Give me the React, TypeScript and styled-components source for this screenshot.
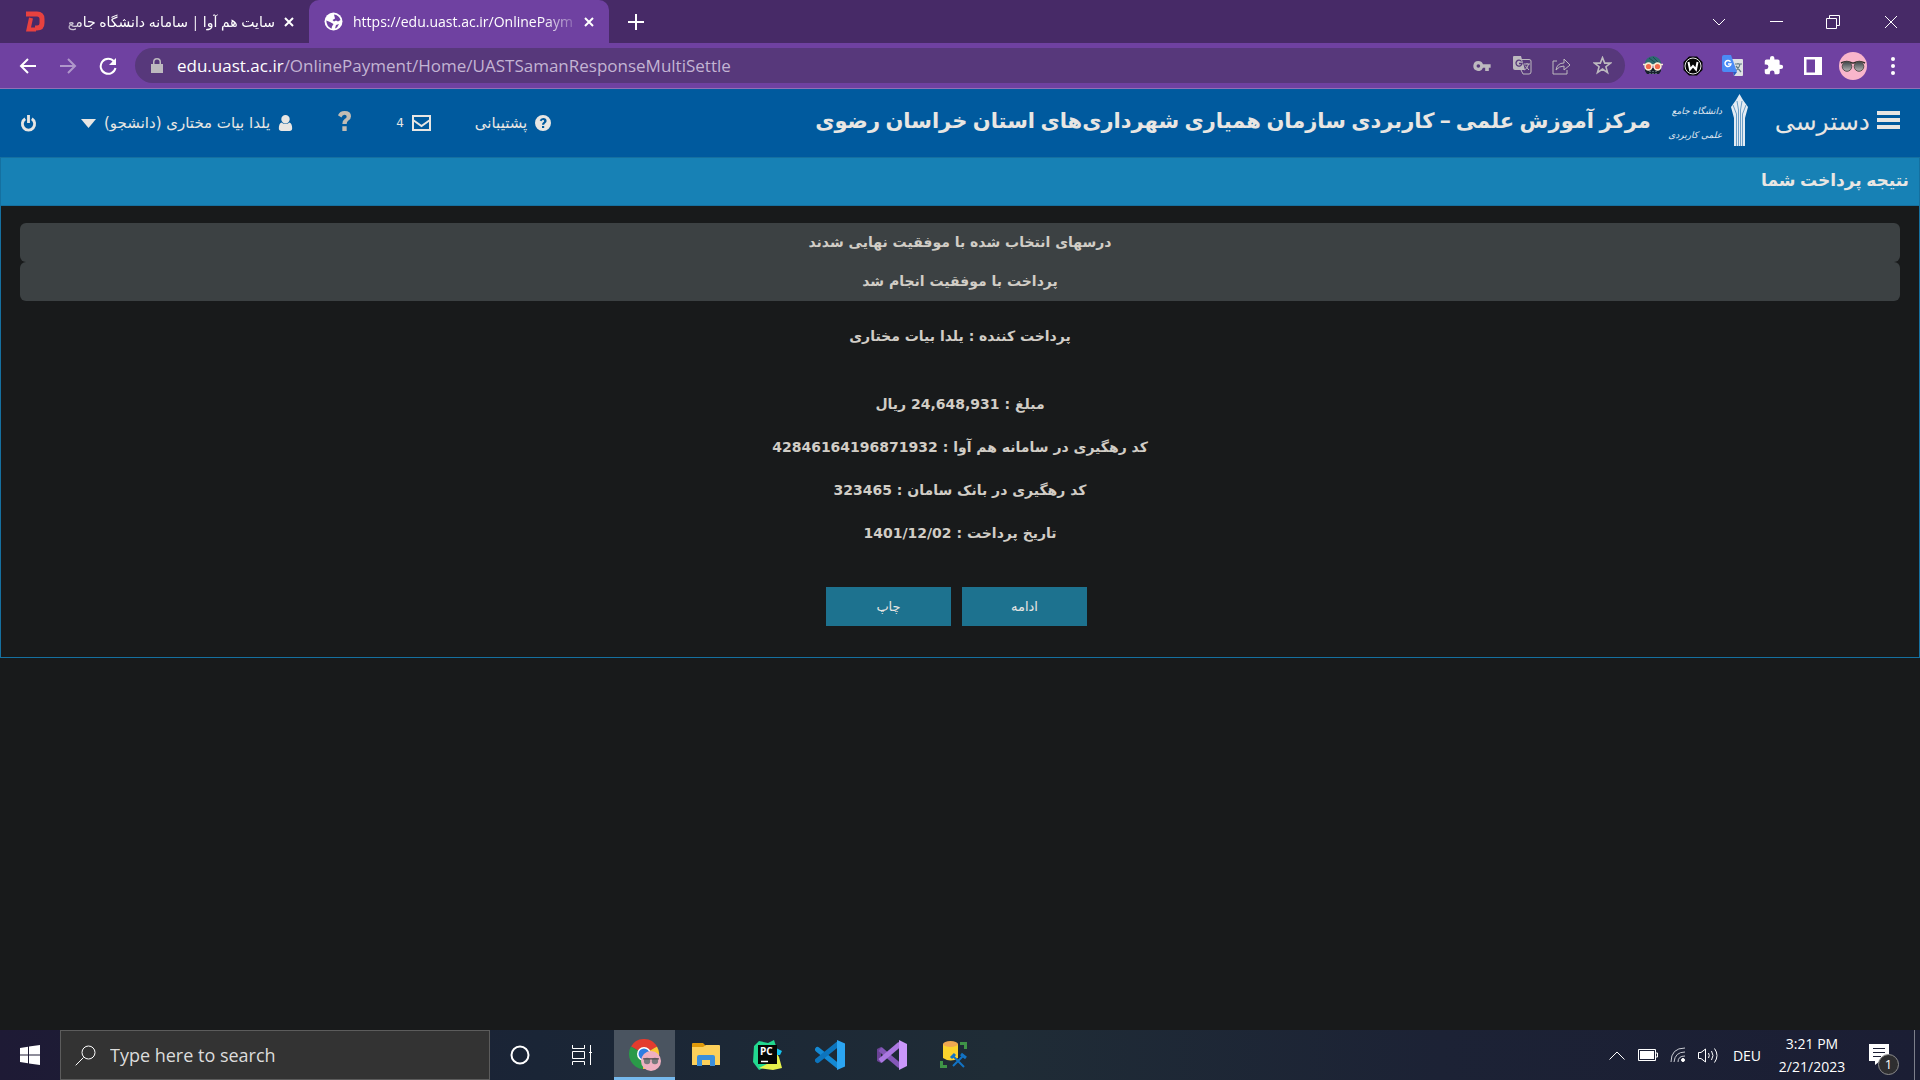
import React from "react";
import styled, { createGlobalStyle } from "styled-components";

const ui = `"Open Sans", "Noto Sans", "DejaVu Sans", sans-serif`;
const farsi = `"Noto Sans", "DejaVu Sans", sans-serif`;
const farsiWide = `"DejaVu Sans", sans-serif`;

const GlobalStyle = createGlobalStyle`
  *, *::before, *::after { box-sizing: border-box; }
  body { margin: 0; background: #181a1b; font-family: ${farsi}; color: #e8e6e3; }
  button { border: 0; padding: 0; background: none; color: inherit; font: inherit; cursor: pointer; }
  a { color: inherit; text-decoration: none; }
  h1, h2, p { margin: 0; }
  svg { display: block; flex: none; }
`;

const Screen = styled.div`
  min-height: 100vh;
  display: flex;
  flex-direction: column;
`;

/* ---------- browser frame ---------- */

const TabStrip = styled.div`
  display: flex;
  align-items: stretch;
  height: 43px;
  background: #472a67;
  font-family: ${ui};
  color: #fff;
`;

const Tab = styled.div<{ $active?: boolean }>`
  display: flex;
  align-items: center;
  gap: ${(p) => (p.$active ? 10 : 8)}px;
  width: ${(p) => (p.$active ? 300 : 309)}px;
  padding: 0 14px 0 ${(p) => (p.$active ? 15 : 25)}px;
  background: ${(p) => (p.$active ? "#6f41a1" : "transparent")};
  border-radius: 10px 10px 0 0;
`;

const TabName = styled.button<{ $rtl?: boolean }>`
  flex: 1;
  white-space: nowrap;
  direction: ${(p) => (p.$rtl ? "rtl" : "ltr")};
  text-align: start;
  font-size: 14px;
  line-height: 24px;
  mask-image: linear-gradient(to ${(p) => (p.$rtl ? "left" : "right")}, #000 86%, transparent 104%);
`;

const IconButton = styled.button<{ $w?: number }>`
  display: flex;
  align-items: center;
  justify-content: center;
  flex: none;
  width: ${(p) => p.$w ?? 40}px;
`;

const ForwardButton = styled(IconButton)`
  opacity: 0.45;
`;

const Spacer = styled.div`
  flex: 1;
`;

const Toolbar = styled.div`
  display: flex;
  align-items: center;
  height: 46px;
  padding: 0 7px 0 8px;
  background: #6f41a1;
  border-bottom: 1px solid #9170b5;
  font-family: ${ui};
  color: #fff;
`;

const AddressBar = styled.div`
  display: flex;
  align-items: center;
  flex: 1;
  height: 35px;
  margin: 0 8px 0 7px;
  padding: 0 3px 0 16px;
  border-radius: 18px;
  background: #57387b;
  color: #bdb9bf;
`;

const Address = styled.div`
  flex: 1;
  margin-left: 14px;
  font-size: 17px;
  line-height: 24px;
  white-space: nowrap;
  color: #c3b4d3;
  outline: 0;
`;

const Host = styled.span`
  color: #fff;
`;

/* ---------- site header ---------- */

const Header = styled.header`
  direction: rtl;
  display: flex;
  align-items: center;
  justify-content: space-between;
  height: 68px;
  padding: 0 20px;
  background: #005a9e;
`;

const HeaderGroup = styled.div`
  display: flex;
  align-items: center;
  padding-bottom: 6px;
`;

const MenuButton = styled.button`
  display: flex;
  align-items: center;
  gap: 7px;
  font-size: 25px;
  line-height: 32px;
`;

const Brand = styled.a`
  display: block;
  margin: 0 27px 0 20px;
`;

const SiteTitle = styled.h1`
  font-size: 21px;
  line-height: 32px;
  font-weight: 700;
  white-space: nowrap;
`;

const AccountNav = styled.nav`
  display: flex;
  align-items: center;
  gap: 44px;
  font-family: ${farsiWide};
`;

const NavLink = styled.a<{ $muted?: boolean }>`
  display: flex;
  align-items: center;
  gap: 8px;
  padding-bottom: ${(p) => (p.$muted ? 4 : 0)}px;
  font-size: 15px;
  line-height: 24px;
  white-space: nowrap;
  color: ${(p) => (p.$muted ? "#c2bcb3" : "#e8e6e3")};
`;

const Count = styled.span`
  font-size: 12px;
`;

/* ---------- payment result ---------- */

const Panel = styled.section`
  direction: rtl;
  border: 1px solid #1570a0;
`;

const PanelTitle = styled.h2`
  display: flex;
  align-items: center;
  height: 48px;
  padding: 0 10px 4px;
  background: #1781b5;
  border-bottom: 1px solid #1570a0;
  font-size: 17px;
  line-height: 24px;
`;

const PanelBody = styled.div`
  display: flex;
  flex-direction: column;
  align-items: center;
  padding: 17px 19px 31px;
  font-family: ${farsiWide};
  font-size: 14px;
  font-weight: 700;
  line-height: 23px;
  color: #d1cdc6;
`;

const Notice = styled.p`
  width: 100%;
  padding: 8px;
  border-radius: 6px;
  background: #3c4143;
  text-align: center;
`;

const Payer = styled.p`
  margin-top: 24px;
`;

const Details = styled.div`
  display: flex;
  flex-direction: column;
  align-items: center;
  gap: 20px;
  margin-top: 45px;
`;

const Actions = styled.div`
  display: flex;
  gap: 11px;
  margin: 42px 7px 0 0;
`;

const ActionButton = styled.button`
  width: 125px;
  height: 39px;
  background: #1d728f;
  color: #e8e6e3;
  font-size: 13px;
  font-weight: 400;
`;

/* ---------- taskbar ---------- */

const Taskbar = styled.footer`
  display: flex;
  align-items: stretch;
  height: 50px;
  margin-top: auto;
  background: linear-gradient(90deg, #1e1a35 0%, #1a2536 28%, #1f2c36 52%, #1c2235 75%, #1b1e34 100%);
  font-family: ${ui};
  color: #fff;
`;

const SearchBox = styled.label`
  display: flex;
  align-items: center;
  gap: 14px;
  width: 430px;
  padding: 0 14px;
  background: #333;
  border: 1px solid #5c5c5c;
`;

const SearchInput = styled.input`
  flex: 1;
  min-width: 0;
  border: 0;
  padding: 0;
  outline: 0;
  background: none;
  font-family: ${ui};
  font-size: 18px;
  color: #dcdcdc;
  &::placeholder { color: #dcdcdc; opacity: 1; }
`;

const AppButton = styled(IconButton)<{ $active?: boolean }>`
  border-bottom: 3px solid ${(p) => (p.$active ? "#76b9ed" : "transparent")};
  border-top: 3px solid transparent;
  background: ${(p) => (p.$active ? "#4a5460" : "transparent")};
`;

const Language = styled.button`
  width: 46px;
  font-size: 14px;
`;

const Clock = styled.button`
  width: 84px;
  font-size: 14px;
  line-height: 23px;
  white-space: nowrap;
`;

const Notifications = styled.button`
  position: relative;
  display: flex;
  align-items: center;
  width: 61px;
  padding-left: 15px;
  border-right: 1px solid #7d7f8b;
  margin-right: 5px;
`;

const Badge = styled.span`
  position: absolute;
  left: 24px;
  top: 24px;
  width: 21px;
  height: 21px;
  border: 1px solid #8c8c8c;
  border-radius: 50%;
  background: #2e2e30;
  font-size: 13px;
  line-height: 19px;
  text-align: center;
`;

/* ---------- icons ---------- */

type StrokeProps = { w: number; h?: number; d: string; sw?: number; vb?: string };

const Stroke = ({ w, h, d, sw = 2, vb }: StrokeProps) => (
  <svg width={w} height={h ?? w} viewBox={vb ?? `0 0 ${w} ${h ?? w}`} fill="none" stroke="currentColor" strokeWidth={sw}>
    <path d={d} />
  </svg>
);

const Solid = ({ w, h, d, vb = "0 0 24 24" }: { w: number; h?: number; d: string; vb?: string }) => (
  <svg width={w} height={h ?? w} viewBox={vb} fill="currentColor" fillRule="evenodd">
    <path d={d} />
  </svg>
);

const CloseIcon = () => <Stroke w={10} d="M1 1L9 9M9 1L1 9" />;

const SiteFavicon = () => (
  <svg width="20" height="21" viewBox="0 0 20 21" fill="none" stroke="#e8413f" strokeWidth="5">
    <path d="M1 3H12Q17 3 17 8V12Q17 17 12 17H10" />
    <path d="M6 7L3.500 18.500H11" strokeWidth="4" />
  </svg>
);

const GlobeIcon = () => (
  <svg width="19" height="19" viewBox="0 0 19 19">
    <circle cx="9.5" cy="9.5" r="9" fill="#fff" />
    <path d="M10 2.500Q15 3 16.500 8L14 9.500L12 8.500L10 9.500L8.500 8L11 6.500Z" fill="#6f41a1" />
    <path d="M2.300 8.500L6 10L9.500 12L8 14.500L7.500 16.700Q2.500 14.500 2.300 8.500Z" fill="#6f41a1" />
    <path d="M12 13L15 12L13 15.500L11 16.500Z" fill="#6f41a1" />
  </svg>
);

const TranslateMono = () => (
  <svg width="19" height="19" viewBox="0 0 19 19">
    <path d="M8 3.500H16Q18 3.500 18 5V16Q18 18 16 18H10L8 14" fill="none" stroke="#bdb9bf" strokeWidth="1" />
    <path d="M1 0H8L12 14H2Q0 14 0 12V1Q0 0 1 0Z" fill="#bdb9bf" />
    <path d="M8.500 5.500A3 3 0 1 0 9 7.500H6" fill="none" stroke="#57387b" strokeWidth="1.300" />
    <path d="M11 8H17M14 7V8M15.500 8Q15 12 11.500 14M12 9.500L16 14" fill="none" stroke="#bdb9bf" strokeWidth="1" />
  </svg>
);

const TranslateColor = () => (
  <svg width="22" height="22" viewBox="0 0 22 22">
    <path d="M9 4H20Q21 4 21 5V20Q21 21 20 21H12Z" fill="#dfe1e3" />
    <path d="M13 9H20M16 8V9M18 9Q17 14 13 16M14 11L19 17" fill="none" stroke="#5f7a84" strokeWidth="1.200" />
    <path d="M11 17H15L12 21Z" fill="#2b5cc0" />
    <path d="M2 0H9L15 17H2Q0 17 0 15V2Q0 0 2 0Z" fill="#4b8bf5" />
    <path d="M8.500 6.800A3 3 0 1 0 9 9H6" fill="none" stroke="#fff" strokeWidth="1.500" />
  </svg>
);

const MaskIcon = () => (
  <svg width="20" height="20" viewBox="0 0 20 20">
    <path d="M1.500 9Q2 1 10 0Q18 1 18.500 9Z" fill="#2d6b70" />
    <path d="M6 2L14 8M10 1L16 7" stroke="#1c4a50" />
    <path d="M2 12H18V15L16 18H4L2 15Z" fill="#17202c" />
    <path d="M7 15V19M10 15V19M13 15V19" stroke="#8aa4aa" strokeDasharray="1 1" />
    <circle cx="5.500" cy="10.500" r="3.400" fill="#ef6a4c" stroke="#f7ead2" strokeWidth="1.600" />
    <circle cx="14.500" cy="10.500" r="3.400" fill="#ef6a4c" stroke="#f7ead2" strokeWidth="1.600" />
    <path d="M0 8.500H3M17 8.500H20M8.500 9H11.500" stroke="#f7ead2" strokeWidth="1.500" />
  </svg>
);

const WIcon = () => (
  <svg width="20" height="20" viewBox="0 0 20 20">
    <path d="M6 .5H14L19.500 6V14L14 19.500H6L.5 14V6Z" fill="#050505" />
    <circle cx="10" cy="10" r="8" fill="#050505" stroke="#e8e8e8" strokeWidth="1" />
    <path d="M5.500 6L7 13.500L10 10L13 13.500L14.500 6" fill="none" stroke="#fff" strokeWidth="2" />
  </svg>
);

const Avatar = ({ size }: { size: number }) => (
  <svg width={size} height={size} viewBox="0 0 28 28">
    <defs>
      <linearGradient id="lens" x1="0" x2="0" y1="0" y2="1">
        <stop offset="0" stopColor="#3b4548" />
        <stop offset="1" stopColor="#b9b5b6" />
      </linearGradient>
    </defs>
    <circle cx="14" cy="14" r="14" fill="#f9b5cb" />
    <path d="M2 11Q8 8 13 11H15Q20 8 26 11" fill="none" stroke="#33302e" strokeWidth="1.500" />
    <circle cx="8" cy="14.500" r="4.800" fill="url(#lens)" stroke="#57504d" />
    <circle cx="20" cy="14.500" r="4.800" fill="url(#lens)" stroke="#57504d" />
  </svg>
);

const UniversityLogo = () => (
  <svg width="77" height="52" viewBox="0 0 77 52" direction="rtl" overflow="visible">
    <path d="M68.500 0L72 6L77 13L74 24V52H63V24L60 13L65 6Z" fill="#e4ecf4" />
    <path d="M65.500 52V20L62 11M67.500 52V16L66 7M69.500 52V16L71 7M71.500 52V20L75 11" stroke="#4d8bbb" strokeWidth="0.800" fill="none" />
    <g fill="#e4ebf2" fontFamily="DejaVu Sans, sans-serif" fontStyle="italic" fontSize="9">
      <text x="51" y="20">دانشگاه جامع</text>
      <text x="51" y="44">علمی کاربردی</text>
    </g>
  </svg>
);

const ChromeIcon = () => (
  <svg width="32" height="32" viewBox="0 0 32 32">
    <path d="M15 15L2 7.500A15 15 0 0 1 28 7.500Z" fill="#e33b2e" />
    <path d="M15 15L2 7.500A15 15 0 0 0 14 30Z" fill="#2a9a48" />
    <path d="M15 15L28 7.500A15 15 0 0 1 14 30Z" fill="#fcc934" />
    <path d="M15 8H28.300L26 5H12Z" fill="#e33b2e" />
    <circle cx="15" cy="15" r="7" fill="#fff" />
    <circle cx="15" cy="15" r="5.500" fill="#2f7de1" />
    <svg x="12" y="12" width="20" height="20" viewBox="0 0 28 28">
      <circle cx="14" cy="14" r="14" fill="#efb0c0" />
      <circle cx="8.500" cy="14" r="4.500" fill="#77797c" />
      <circle cx="19.500" cy="14" r="4.500" fill="#77797c" />
      <path d="M3 11H25" stroke="#5b5557" strokeWidth="2" />
    </svg>
  </svg>
);

const FolderIcon = () => (
  <svg width="28" height="24" viewBox="0 0 28 24">
    <path d="M0 1Q0 0 1 0H11L14 3V5H0Z" fill="#e09a0a" />
    <path d="M0 4H11L14 2H27Q28 2 28 3V22H0Z" fill="#fdd05a" />
    <path d="M5 23V14Q5 12 7 12H21Q23 12 23 14V23H18V17H10V23Z" fill="#3c8fdc" />
  </svg>
);

const PyCharmIcon = () => (
  <svg width="30" height="30" viewBox="0 0 30 30">
    <path d="M1 6L6 1L15 3L21 0L23 6L20 24L6 30L0 22Z" fill="#22d88f" />
    <path d="M23 12L26 17L29 28L20 30L6 28L22 20Z" fill="#e6f14b" />
    <path d="M23 8L29 11L27 15L23 15Z" fill="#16c3ee" />
    <rect x="5" y="5" width="19" height="19" fill="#050805" />
    <path d="M8 21.500H15" stroke="#fff" strokeWidth="1.500" />
    <text x="7" y="14.500" fill="#fff" fontFamily="Open Sans, sans-serif" fontWeight="700" fontSize="10">PC</text>
  </svg>
);

const VSCodeIcon = () => (
  <svg width="30" height="30" viewBox="0 0 30 30">
    <path d="M2.500 9.500L23 26" stroke="#1489d4" strokeWidth="5" strokeLinecap="round" />
    <path d="M2.500 20.500L23 4" stroke="#0c74bd" strokeWidth="5" strokeLinecap="round" />
    <path d="M22 0L30 3.500V26.500L22 30Z" fill="#2ba5f2" />
  </svg>
);

const VisualStudioIcon = () => (
  <svg width="30" height="30" viewBox="0 0 30 30">
    <path d="M0 9L4 7V23L0 21Z" fill="#6a4294" />
    <path d="M3 9L23 26" stroke="#8457b8" strokeWidth="5" />
    <path d="M3 21L23 4" stroke="#ab78e2" strokeWidth="5" />
    <path d="M22 0L30 4V26L22 30Z" fill="#cb97fb" />
  </svg>
);

const DatabaseIcon = () => (
  <svg width="30" height="30" viewBox="0 0 30 30">
    <path d="M21 3.500H26.500V9M2.500 21V26.500H8" fill="none" stroke="#3f9447" strokeWidth="3" />
    <path d="M4 4H19V18Q12 23 4 18Z" fill="#fbd32d" />
    <ellipse cx="11.500" cy="4" rx="7.500" ry="3" fill="#f0a851" />
    <path d="M14 26L25 15M14 16L25 27" stroke="#1273c4" strokeWidth="2" />
    <path d="M12 18L16 14M22 14L27 18" stroke="#1273c4" strokeWidth="3" />
  </svg>
);

const BellPanelIcon = () => (
  <svg width="20" height="22" viewBox="0 0 20 22">
    <path d="M0 0H20V17H11L6 21V17H0Z" fill="#fff" />
    <path d="M4 4.500H16M4 8.500H16M4 12.500H12" stroke="#1b1e34" />
  </svg>
);

/* ---------- content ---------- */

const notices = ["درسهای انتخاب شده با موفقیت نهایی شدند", "پرداخت با موفقیت انجام شد"];

const details = [
  "مبلغ : 24,648,931 ریال",
  "کد رهگیری در سامانه هم آوا : 42846164196871932",
  "کد رهگیری در بانک سامان : 323465",
  "تاریخ پرداخت : 1401/12/02",
];

const apps = [
  { name: "File Explorer", icon: <FolderIcon /> },
  { name: "PyCharm", icon: <PyCharmIcon /> },
  { name: "Visual Studio Code", icon: <VSCodeIcon /> },
  { name: "Visual Studio", icon: <VisualStudioIcon /> },
  { name: "Data Studio", icon: <DatabaseIcon /> },
];

const starPath = "M12 2L14.800 9H22L16.300 13.500L18.400 21L12 16.500L5.600 21L7.700 13.500L2 9H9.200Z";

function BrowserFrame() {
  return (
    <>
      <TabStrip>
        <Tab>
          <SiteFavicon />
          <TabName $rtl>سایت هم آوا | سامانه دانشگاه جامع</TabName>
          <IconButton $w={12} aria-label="Close tab"><CloseIcon /></IconButton>
        </Tab>
        <Tab $active>
          <GlobeIcon />
          <TabName>https://edu.uast.ac.ir/OnlinePaym</TabName>
          <IconButton $w={12} aria-label="Close tab"><CloseIcon /></IconButton>
        </Tab>
        <IconButton $w={54} aria-label="New tab"><Stroke w={16} d="M8 0V16M0 8H16" /></IconButton>
        <Spacer />
        <IconButton $w={58} aria-label="Search tabs"><Stroke w={14} h={8} d="M1 1L7 7L13 1" sw={1} /></IconButton>
        <IconButton $w={56} aria-label="Minimize"><Stroke w={13} d="M0 6.500H13" sw={1} /></IconButton>
        <IconButton $w={58} aria-label="Restore"><Stroke w={14} d="M.5 3.500H10.500V13.500H.5ZM3.500 3V.5H13.500V10.500H11" sw={1} /></IconButton>
        <IconButton $w={58} aria-label="Close"><Stroke w={14} d="M1 1L13 13M13 1L1 13" sw={1} /></IconButton>
      </TabStrip>
      <Toolbar>
        <IconButton aria-label="Back"><Stroke w={18} d="M17 9H2M9 2L2 9L9 16" /></IconButton>
        <ForwardButton aria-label="Forward"><Stroke w={18} d="M1 9H16M9 2L16 9L9 16" /></ForwardButton>
        <IconButton aria-label="Reload">
          <svg width="18" height="18" viewBox="0 0 18 18">
            <path d="M15 4.500A7.500 7.500 0 1 0 16.500 11" fill="none" stroke="#fff" strokeWidth="2" />
            <path d="M17 1V8H10Z" fill="#fff" />
          </svg>
        </IconButton>
        <AddressBar>
          <Solid w={12} h={15} vb="0 0 12 15" d="M2 6V4A4 4 0 0 1 10 4V6H12V15H0V6ZM3.500 6H8.500V4A2.500 2.500 0 0 0 3.500 4Z" />
          <Address role="textbox" aria-label="Address" contentEditable suppressContentEditableWarning spellCheck={false}>
            <Host>edu.uast.ac.ir</Host>/OnlinePayment/Home/UASTSamanResponseMultiSettle
          </Address>
          <IconButton aria-label="Passwords">
            <Solid w={18} h={10} vb="0 0 19 11" d="M5.500 0A5.500 5.500 0 0 1 10.600 3.500H19V7.500H17V11H13V7.500H10.600A5.500 5.500 0 1 1 5.500 0ZM5.500 3.500A2 2 0 1 0 5.500 7.500A2 2 0 1 0 5.500 3.500Z" />
          </IconButton>
          <IconButton aria-label="Translate"><TranslateMono /></IconButton>
          <IconButton aria-label="Share"><Stroke w={20} h={18} d="M5 4H1V17H15V13M4 13Q5 6 12 6V2L18 8L12 13V9Q7 9 4 13Z" sw={1} /></IconButton>
          <IconButton aria-label="Bookmark"><Stroke w={19} d={starPath} vb="0 0 24 24" /></IconButton>
        </AddressBar>
        <IconButton aria-label="Mask extension"><MaskIcon /></IconButton>
        <IconButton aria-label="W extension"><WIcon /></IconButton>
        <IconButton aria-label="Google Translate"><TranslateColor /></IconButton>
        <IconButton aria-label="Extensions">
          <Solid w={21} d="M20.500 11H19V7a2 2 0 0 0-2-2h-4V3.500a2.500 2.500 0 0 0-5 0V5H4a2 2 0 0 0-2 2v3.800h1.500a2.700 2.700 0 0 1 0 5.400H2V20a2 2 0 0 0 2 2h3.800v-1.500a2.700 2.700 0 0 1 5.400 0V22H17a2 2 0 0 0 2-2v-4h1.500a2.500 2.500 0 0 0 0-5z" />
        </IconButton>
        <IconButton aria-label="Side panel"><Solid w={18} vb="0 0 18 18" d="M0 0H18V18H0ZM2.500 2.500H11V15.500H2.500Z" /></IconButton>
        <IconButton aria-label="Profile"><Avatar size={28} /></IconButton>
        <IconButton aria-label="Menu">
          <svg width="4" height="18" viewBox="0 0 4 18" fill="#fff">
            <circle cx="2" cy="2" r="2" /><circle cx="2" cy="9" r="2" /><circle cx="2" cy="16" r="2" />
          </svg>
        </IconButton>
      </Toolbar>
    </>
  );
}

function SiteHeader() {
  return (
    <Header>
      <HeaderGroup>
        <MenuButton>
          <Solid w={23} h={18} vb="0 0 23 18" d="M0 0H23V4H0ZM0 7H23V11H0ZM0 14H23V18H0Z" />
          دسترسی
        </MenuButton>
        <Brand href="#" aria-label="دانشگاه جامع علمی کاربردی"><UniversityLogo /></Brand>
        <SiteTitle>مرکز آموزش علمی – کاربردی سازمان همیاری شهرداری‌های استان خراسان رضوی</SiteTitle>
      </HeaderGroup>
      <AccountNav>
        <NavLink href="#">
          <Solid w={16} vb="0 0 16 16" d="M8 0A8 8 0 1 1 8 16A8 8 0 1 1 8 0ZM7 11V13H9.200V11ZM4.700 5.500L6.500 6.300Q7 5 8 5Q9.200 5 9.200 6Q9.200 6.800 8 7.500Q7 8.200 7 9.800H9.200Q9.200 9 10.200 8.300Q11.600 7.400 11.600 6Q11.600 3 8.200 3Q5.500 3 4.700 5.500Z" />
          پشتیبانی
        </NavLink>
        <NavLink href="#">
          <Stroke w={19} h={16} d="M1 1H18V15H1ZM1 5L9.500 11L18 5" />
          <Count>4</Count>
        </NavLink>
        <NavLink href="#" $muted aria-label="راهنما">
          <Solid w={15} h={20} vb="0 0 15 23" d="M5 17.500H10V23H5ZM0 5Q2 0 7.500 0Q15 0 15 6Q15 9 12 11Q10 12.500 10 15H5Q5 11 8 9Q10 8 10 6.200Q10 4.200 7.500 4.200Q5 4.200 4 7.500Z" />
        </NavLink>
        <NavLink href="#">
          <Solid w={15} h={16} vb="0 0 15 18" d="M7.500 0A4.500 4.500 0 1 1 7.500 9.500A4.500 4.500 0 1 1 7.500 0ZM3 8.500Q7.500 12 12 8.500Q15 10 15 15Q15 18 12 18H3Q0 18 0 15Q0 10 3 8.500Z" />
          یلدا بیات مختاری (دانشجو)
          <Solid w={15} h={9} vb="0 0 15 9" d="M0 0H15L7.500 9Z" />
        </NavLink>
        <NavLink href="#" aria-label="خروج">
          <Stroke w={17} h={17} vb="0 0 17 18" d="M5 4A6.500 6.500 0 1 0 12 4M8.500 0V8.500" sw={3} />
        </NavLink>
      </AccountNav>
    </Header>
  );
}

function PaymentResult() {
  return (
    <Panel>
      <PanelTitle>نتیجه پرداخت شما</PanelTitle>
      <PanelBody>
        {notices.map((text) => <Notice key={text}>{text}</Notice>)}
        <Payer>پرداخت کننده : یلدا بیات مختاری</Payer>
        <Details>
          {details.map((text) => <p key={text}>{text}</p>)}
        </Details>
        <Actions>
          <ActionButton>ادامه</ActionButton>
          <ActionButton>چاپ</ActionButton>
        </Actions>
      </PanelBody>
    </Panel>
  );
}

function WindowsTaskbar() {
  return (
    <Taskbar>
      <IconButton $w={60} aria-label="Start">
        <Solid w={20} vb="0 0 20 20" d="M0 3L8 1.700V9.500H0ZM9 1.500L20 0V9.500H9ZM0 10.500H8V18.300L0 17ZM9 10.500H20V20L9 18.500Z" />
      </IconButton>
      <SearchBox>
        <Stroke w={21} d="M.7 20.300L8.500 12.500M13.500 1A6.500 6.500 0 1 1 13.500 14A6.500 6.500 0 1 1 13.500 1Z" sw={1} />
        <SearchInput type="text" aria-label="Search" placeholder="Type here to search" />
      </SearchBox>
      <IconButton $w={60} aria-label="Cortana">
        <Stroke w={20} d="M10 1.500A8.500 8.500 0 1 1 10 18.500A8.500 8.500 0 1 1 10 1.500Z" sw={2} />
      </IconButton>
      <IconButton $w={64} aria-label="Task view">
        <Stroke w={20} d="M.5 0V3.500H12.500V0M.5 20V16.500H12.500V20M.5 6.500H12.500V13.500H.5ZM18.500 0V20M17 7.500H20" sw={1} />
      </IconButton>
      <AppButton $w={61} $active aria-label="Google Chrome"><ChromeIcon /></AppButton>
      {apps.map((app) => (
        <AppButton key={app.name} $w={62} aria-label={app.name}>{app.icon}</AppButton>
      ))}
      <Spacer />
      <IconButton $w={30} aria-label="Show hidden icons"><Stroke w={16} h={9} d="M0.500 8.500L8 1L15.500 8.500" sw={1} /></IconButton>
      <IconButton $w={32} aria-label="Battery">
        <svg width="20" height="12" viewBox="0 0 20 12"><path d="M.5.5H17.500V11.500H.5ZM18 4H19.500V8H18" fill="none" stroke="#fff" /><rect x="2" y="2" width="14" height="8" fill="#fff" /></svg>
      </IconButton>
      <IconButton $w={28} aria-label="Network">
        <svg width="16" height="16" viewBox="0 0 16 16" fill="none" stroke="#c9cbd2"><path d="M1 15Q1 1 15 1M4 15Q5 5 15 5M8 15Q8 9 15 9" /><circle cx="13" cy="13" r="1.500" fill="#fff" stroke="#fff" /></svg>
      </IconButton>
      <IconButton $w={32} aria-label="Volume">
        <Stroke w={21} h={17} d="M.5 5.500H3L7.500 2V15L3 11.500H.5ZM10.500 6Q12 8.500 10.500 11M13.500 4Q16.500 8.500 13.500 13M16.500 1.500Q21.500 8.500 16.500 15.500" sw={1} />
      </IconButton>
      <Language>DEU</Language>
      <Clock>3:21 PM<br />2/21/2023</Clock>
      <Notifications aria-label="Notifications"><BellPanelIcon /><Badge>1</Badge></Notifications>
    </Taskbar>
  );
}

export default function App() {
  return (
    <Screen>
      <GlobalStyle />
      <BrowserFrame />
      <SiteHeader />
      <PaymentResult />
      <WindowsTaskbar />
    </Screen>
  );
}
